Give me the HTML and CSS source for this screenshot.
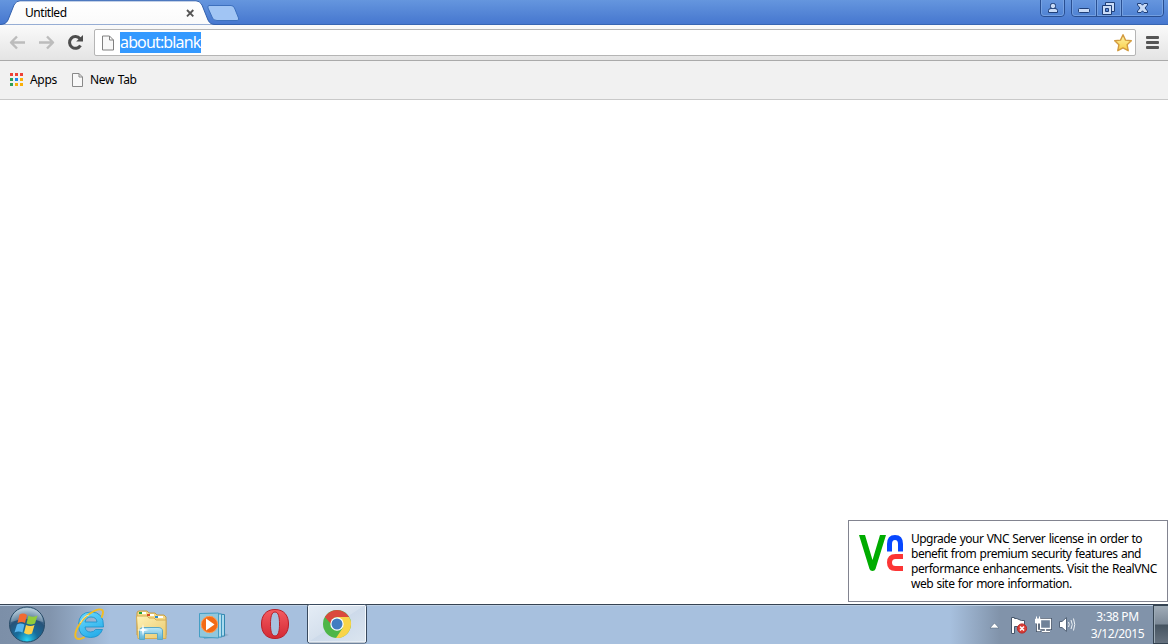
FILE: index.html
```html
<!DOCTYPE html>
<html lang="en">
<head>
<meta charset="utf-8">
<title>Untitled</title>
<link rel="stylesheet" href="styles.css">
</head>
<body>
<div class="desktop">
  <header class="titlebar">
    <div class="tab">
      <svg class="tab-shape" width="240" height="25" viewBox="0 0 240 25">
        <defs><linearGradient id="tabfill" x2="0" y2="1"><stop stop-color="#fff"/><stop offset="1" stop-color="#fafafa"/></linearGradient></defs>
        <path d="M0 25V24.5Q6 24.5 8 20L14 5Q16 .8 20 .8H196Q200 .8 202 5L208 20Q210 24.5 215 24.5H240V25Z" fill="url(#tabfill)" stroke="#3261ae"/>
        <path d="M209 5.500H231Q233.500 5.500 234.500 8L238.500 18Q239.500 20.500 237 20.500H217Q213.500 20.500 212.500 18L208 8Q207.500 5.500 209 5.500Z" fill="#a1c5f4" stroke="#3d70bd"/>
      </svg>
      <span class="tab-title">Untitled</span>
      <svg class="tab-close" width="9" height="9" viewBox="0 0 9 9"><path d="M1 1L7.300 7.300M7.300 1L1 7.300" stroke="#555" stroke-width="1.900"/></svg>
    </div>
    <svg class="window-controls" width="126" height="18" viewBox="0 0 126 18">
      <defs><linearGradient id="btn" x2="0" y2="1"><stop stop-color="#6797df"/><stop offset="1" stop-color="#4f82d3"/></linearGradient></defs>
      <g fill="url(#btn)" stroke="#294f92">
        <path d="M.5 -1V13Q.5 16.500 4 16.500H21Q24.500 16.500 24.500 13V-1Z"/>
        <path d="M31.500 -1V13Q31.500 16.500 35 16.500H120Q123.500 16.500 123.500 13V-1Z"/>
        <path d="M56.500 0V16M81.500 0V16"/>
      </g>
      <path d="M1.500 0V13Q1.500 15.500 4 15.500H21Q23.500 15.500 23.500 13V0M32.500 0V13Q32.500 15.500 35 15.500H55.500V0M57.500 0V15.500H80.500V0M82.500 0V15.500H120Q122.500 15.500 122.500 13V0" fill="none" stroke="#7fa8e4" stroke-opacity=".75"/>
      <g fill="#cadcf7" stroke="#1f3f78">
        <path d="M8.500 12.500V10.500Q8.500 8.500 11 8.500H15Q17.500 8.500 17.500 10.500V12.500Z"/>
        <rect x="10.500" y="3.500" width="5" height="5" rx="1.800"/>
        <rect x="38.500" y="8.500" width="11" height="4" rx="1"/>
        <path d="M65.500 2.500H74.500V11.500H65.500Z"/><path d="M62.500 5.500H71.500V14.500H62.500Z"/><path d="M65.500 8.500H68.500V11.500H65.500Z" fill="#5688d8"/>
        <path d="M97.500 3.500H101L102.500 5.200L104 3.500H107.500V5L105 8L107.500 11V12.500H104L102.500 10.800L101 12.500H97.500V11L100 8L97.500 5Z"/>
      </g>
    </svg>
  </header>

  <nav class="toolbar">
    <svg class="nav-icons" width="94" height="36" viewBox="0 0 94 36">
      <g fill="none" stroke="#bcbcbc" stroke-width="2.400" stroke-linejoin="round">
        <path d="M25 17.500H11.500M17 11.500L11 17.500L17 23.500"/>
        <path d="M39 17.500H52.500M47 11.500L53 17.500L47 23.500"/>
      </g>
      <path d="M80 13.700A5.900 5.900 0 1 0 80.500 20.500" fill="none" stroke="#4d4d4d" stroke-width="3"/>
      <path d="M83 10V16.500H76.200Z" fill="#4d4d4d"/>
    </svg>
    <div class="omnibox">
      <svg class="page-icon" width="13" height="16" viewBox="0 0 13 16"><path d="M.5 1H7.500L11.500 5V15H.5ZM7.500 1V5H11.500" fill="#f8f8f8" stroke="#808080"/></svg>
      <span class="url">about:blank</span>
      <svg class="star" width="20" height="20" viewBox="0 0 20 20"><defs><linearGradient id="gold" x2="0" y2="1"><stop stop-color="#fff5a9"/><stop offset="1" stop-color="#f9cd45"/></linearGradient></defs><path d="M10 1.700L12.500 7.100L18.300 7.800L14.100 11.700L15.200 17.700L10 14.800L4.800 17.700L5.900 11.700L1.700 7.800L7.500 7.100Z" fill="url(#gold)" stroke="#d39b3f" stroke-width="1.400" stroke-linejoin="round"/></svg>
    </div>
    <svg class="menu-icon" width="13" height="13" viewBox="0 0 13 13"><g fill="#555"><rect width="13" height="3" rx="1"/><rect y="5" width="13" height="3" rx="1"/><rect y="10" width="13" height="3" rx="1"/></g></svg>
  </nav>

  <nav class="bookmarks">
    <svg class="apps-icon" width="13" height="13" viewBox="0 0 13 13">
      <path d="M0 0H3V3H0ZM5 0H8V3H5ZM10 0H13V3H10Z" fill="#ee4137"/>
      <path d="M0 5H3V8H0ZM0 10H3V13H0Z" fill="#2d9e57"/><path d="M5 5H8V8H5Z" fill="#1a87f0"/>
      <path d="M5 10H8V13H5Z" fill="#f6b00c"/><path d="M10 5H13V8H10ZM10 10H13V13H10Z" fill="#f9af08"/>
    </svg>
    <span class="apps-label">Apps</span>
    <svg class="bookmark-page" width="13" height="16" viewBox="0 0 13 16"><path d="M1.500 1.500H8L11.500 5V14.500H1.500ZM8 1.500V5H11.500" fill="#f8f8f8" stroke="#898989"/></svg>
    <span class="newtab-label">New Tab</span>
  </nav>

  <main class="page">
    <section class="notice">
      <svg class="vnc-logo" width="46" height="40" viewBox="0 0 46 40">
        <path d="M1 1H7L14.500 26L22 1H28L17.500 35Q16.800 37 14.500 37Q12.200 37 11.500 35Z" fill="#00ac00"/>
        <path d="M31.500 17.500V10Q31.500 3.500 37 3.500Q42.500 3.500 42.500 10V17.500" fill="none" stroke="#0747ff" stroke-width="5"/>
        <path d="M45 22.500H37.500Q31.500 22.500 31.500 28.500Q31.500 34.500 37.500 34.500H45" fill="none" stroke="#fc3535" stroke-width="5"/>
      </svg>
      <p class="notice-text"><span class="l1">Upgrade your VNC Server license in order to</span><br><span class="l2">benefit from premium security features and</span><br><span class="l3">performance enhancements. Visit the RealVNC</span><br><span class="l4">web site for more information.</span></p>
    </section>
  </main>

  <footer class="taskbar">
    <svg class="launchers" width="370" height="40" viewBox="0 0 370 40">
      <defs>
        <radialGradient id="orb" cx=".5" cy=".95" r=".9"><stop stop-color="#2ad6f5"/><stop offset=".35" stop-color="#176d9c"/><stop offset=".7" stop-color="#285379"/><stop offset="1" stop-color="#9fbcd0"/></radialGradient>
        <linearGradient id="ie" x2=".5" y2="1"><stop stop-color="#6fdaff"/><stop offset="1" stop-color="#2aafea"/></linearGradient>
        <linearGradient id="folder" x2="1" y2="1"><stop stop-color="#fff3b7"/><stop offset="1" stop-color="#e9c96e"/></linearGradient>
        <linearGradient id="glass" x2="0" y2="1"><stop stop-color="#bce9fa"/><stop offset="1" stop-color="#5eb1d3"/></linearGradient>
        <linearGradient id="opera" x2="0" y2="1"><stop stop-color="#f45b60"/><stop offset="1" stop-color="#d32934"/></linearGradient>
        <linearGradient id="active" x2="1" y2="1"><stop stop-color="#e5edf6"/><stop offset=".49" stop-color="#d5e0ed"/><stop offset=".5" stop-color="#cddaea"/><stop offset="1" stop-color="#dce6f0"/></linearGradient>
      </defs>
      <!-- Start orb -->
      <circle cx="27" cy="20.500" r="17.500" fill="url(#orb)" stroke="#294c68"/>
      <path d="M11 18Q12 5 27 4Q42 5 43 18Q27 12 11 18Z" fill="#fff" opacity=".25"/>
      <path d="M19.500 10.500Q23.500 8.500 27 11L25 19Q21.500 17 17.500 19Z" fill="#f16a32"/>
      <path d="M28.500 11.500Q32.500 14 37.500 11.500L35 19.500Q31 21.500 26.500 19.500Z" fill="#91cc3c"/>
      <path d="M17 20.500Q20.500 18.500 24.500 20.500L22.500 28.500Q18.500 26.500 14.500 28.500Z" fill="#57b5ef"/>
      <path d="M26 21Q30.500 23 34.500 21L32 29.500Q28 31.500 24 29Z" fill="#fdd14c"/>
      <!-- Internet Explorer -->
      <path fill-rule="evenodd" d="M103.500 23H85Q85.500 28 90.500 28Q94 28 95.500 25.500H102.500Q99.500 33.500 90.500 33.500Q78.500 33.500 78.500 20.500Q79 8 91 8Q104 8 103.500 23ZM85 18H97Q96.500 13 91 13Q86 13 85 18Z" fill="url(#ie)" stroke="#168fc9" stroke-width=".8"/>
      <path d="M84 33.500Q78 36.500 75.800 33.500C73.500 29 80 16 90 9.500Q99 3.500 102.500 6.300Q103.800 8.500 101.700 13" fill="none" stroke="#f2bd23" stroke-width="1.900" stroke-linecap="round"/>
      <path d="M80.500 19Q83 12 89 11" fill="none" stroke="#fff" opacity=".6"/>
      <!-- File Explorer -->
      <path d="M137 31V9Q137 7 139 7H147L149 9H155L157 11H164L166 13V31Z" fill="#f5d985" stroke="#c49c48"/>
      <path d="M139 10V8H146V10Z" fill="#fff"/><path d="M139 8H142V10H139Z" fill="#20a23a"/>
      <path d="M147 12V10H154V12Z" fill="#fff"/><path d="M147 10H150V12H147Z" fill="#d64b28"/>
      <path d="M155 14V12H163V14Z" fill="#fff"/><path d="M155 12H158V14H155Z" fill="#318bc9"/>
      <path d="M136.500 12H147L149 14H154L156 16H166V34.500H138Z" fill="url(#folder)" stroke="#d4ac54"/>
      <path d="M139.500 35.500V27Q139.500 23.500 143 23.500H158Q162.500 23.500 162.500 27V35.500H157.500V29.500H144.500V35.500Z" fill="url(#glass)" stroke="#5ba9c6"/>
      <path d="M143 20L144 25L149 26L144 27L143 32L142 27L137 26L142 25Z" fill="#fff"/>
      <!-- Media player -->
      <path d="M220 34L229 31L224 29Z" fill="#6f899f" opacity=".4"/>
      <path d="M207 9.500L224.500 10.500V32L207 33Z" fill="#a8daee" stroke="#3186ae"/><path d="M204 9.500L221.500 10V33L204 34Z" fill="#b2dced" stroke="#3c94bd"/>
      <path d="M199.500 9.500L218.500 9V34L199.500 33Z" fill="#91c7dd" stroke="#459ec4"/>
      <circle cx="209.500" cy="20.500" r="8.200" fill="#f36b16" stroke="#ff9b52"/><path d="M206 14.500V26.500L214.500 20.500Z" fill="#fff"/>
      <!-- Opera -->
      <path fill-rule="evenodd" d="M275 5.500C265.500 5.500 261.500 12 261.500 20C261.500 28 265.500 34.500 275 34.500C284.500 34.500 288.500 28 288.500 20C288.500 12 284.500 5.500 275 5.500ZM275 8C278.500 8 279.500 13 279.500 20C279.500 27 278.500 32 275 32C271.500 32 270.500 27 270.500 20C270.500 13 271.500 8 275 8Z" fill="url(#opera)" stroke="#b81e27"/>
      <!-- Active Chrome button -->
      <rect x="307.500" y=".5" width="59" height="38.500" rx="2" fill="url(#active)" stroke="#38495e"/><rect x="308.500" y="1.500" width="57" height="36.500" rx="1" fill="none" stroke="#f5f9fd"/>
      <circle cx="337" cy="20" r="14" fill="#4eb648"/>
      <path d="M337 13H349.100A14 14 0 0 1 336 34L343 23.500Z" fill="#f9d447"/>
      <path d="M324.900 13A14 14 0 0 1 349.100 13H337Q332 13 331 20Z" fill="#da493c"/>
      <circle cx="337" cy="20" r="6.700" fill="#fff"/><circle cx="337" cy="20" r="5.500" fill="#427dc1"/>
    </svg>
    <div class="tray">
      <svg class="tray-icons" width="90" height="24" viewBox="0 0 90 24">
        <path d="M4 15L8.500 10L13 15Z" fill="#fff" stroke="#596b80" stroke-width=".6"/>
        <path d="M25.500 4.500V20.500H28.500V13.500H31Q33 15.500 38.500 14.500V7.500Q35 8 33 6.500Q31 5 28.500 5.500V4.500Z" fill="#fff" stroke="#46566b"/>
        <circle cx="36" cy="15.500" r="4.600" fill="#dc3c34" stroke="#b52a2b"/><path d="M34 13.500L38 17.500M38 13.500L34 17.500" stroke="#fff" stroke-width="1.600"/>
        <path d="M54.500 6.500H64.500V15.500H54.500ZM59.500 15.500V18.500M56 18.500H64M51.500 10V17.500H55" fill="#718298" stroke="#475569" stroke-width="3"/>
        <path d="M54.500 6.500H64.500V15.500H54.500Z" fill="#718298" stroke="#fff" stroke-width="1.300"/>
        <path d="M59.500 15.500V18.500M56 18.500H64M51.500 10V17.500H54.500" fill="none" stroke="#fff" stroke-width="1.300"/>
        <path d="M49.500 6V10H54.500V6ZM50.500 3.500V6M53.500 3.500V6" fill="#fff" stroke="#fff"/>
        <path d="M73.500 8.500H76L80.500 4.500V18.500L76 14.500H73.500Z" fill="#fff" stroke="#56667b"/><path d="M82.500 9Q84 11.500 82.500 14M85 7Q87.500 11.500 85 16M87.500 5.500Q90 11.500 87.500 17.500" fill="none" stroke="#eef3f7"/>
      </svg>
      <div class="clock"><span class="time">3:38 PM</span><br><span class="date">3/12/2015</span></div>
      <div class="show-desktop"></div>
    </div>
  </footer>
</div>
</body>
</html>
```
FILE: styles.css
```css
*{box-sizing:border-box}
body{margin:0;overflow:hidden;background:#fff;font:12px/15px "Noto Sans","Open Sans",sans-serif;color:#000}
svg{display:block;flex:none}
.desktop{width:1168px;height:644px;display:flex;flex-direction:column}
.titlebar{height:25px;display:flex;justify-content:space-between;background:linear-gradient(#6596de,#4677cf);border-bottom:1px solid #3765b2}
.tab{width:240px;height:25px;display:grid;grid-template-columns:25px 161px 54px;align-items:start}
.tab-shape{grid-area:1/1/2/4}
.tab-title{grid-area:1/2;padding-top:5px;line-height:16px;letter-spacing:-.45px}
.tab-close{grid-area:1/3;margin-top:9px}
.window-controls{margin-right:2px}
.toolbar{height:36px;display:flex;align-items:flex-start;background:linear-gradient(#fafafa,#e4e4e4);border-bottom:1px solid #aaa}
.omnibox{width:1042px;height:27px;margin-top:4px;padding-left:7px;border:1px solid #b5b5b5;border-radius:2px;background:#fff;display:flex;align-items:center}
.url{width:81px;height:21px;margin:-1px 0 0 5px;background:#3399ff;color:#fff;font-size:16px;line-height:21px;white-space:nowrap;letter-spacing:-.85px}
.star{margin-left:auto;margin-right:2px}
.menu-icon{margin:11px 0 0 10px}
.bookmarks{height:39px;padding:0 0 1px 10px;background:#f1f1f1;border-bottom:1px solid #c9c9c9;display:flex;align-items:center}
.apps-label{width:42px;margin-left:7px;letter-spacing:-.3px}
.newtab-label{margin-left:6px;letter-spacing:-.35px;word-spacing:1px}
.bookmark-page{margin-left:-1px}
.page{height:504px;display:flex;align-items:flex-end;justify-content:flex-end;padding-bottom:2px}
.notice{width:320px;height:82px;border:1px solid #828490;background:#fff;display:flex;padding:12px 0 0 9px}
.vnc-logo{margin-top:1px}
.notice-text{margin:-2px 0 0 7px;line-height:15px;white-space:nowrap;letter-spacing:-.5px;word-spacing:.8px}
.l1{letter-spacing:-.54px}
.l3{letter-spacing:-.47px}
.taskbar{height:40px;border-top:1px solid #364353;background:linear-gradient(90deg,#7c8fa8 0,#8194ad 50px,#a7c0de 110px,#a7c0de 950px,#8193aa 1000px,#8193aa 100%);box-shadow:inset 0 1px #bdcfe3;display:flex;justify-content:space-between}
.launchers{margin-top:-1px}
.tray{display:flex;height:39px;align-items:flex-start}
.tray-icons{margin-top:8px}
.clock{width:77px;padding:3px 0 0 6px;color:#fff;text-align:center;line-height:17px}
.time,.date{letter-spacing:-.4px}
.show-desktop{width:15px;height:39px;border:1px solid #344351;border-right:0;background:linear-gradient(#a0acb8,#7c8997 48%,#465461 52%,#66727f);box-shadow:inset 1px 1px #9caab6}
```
